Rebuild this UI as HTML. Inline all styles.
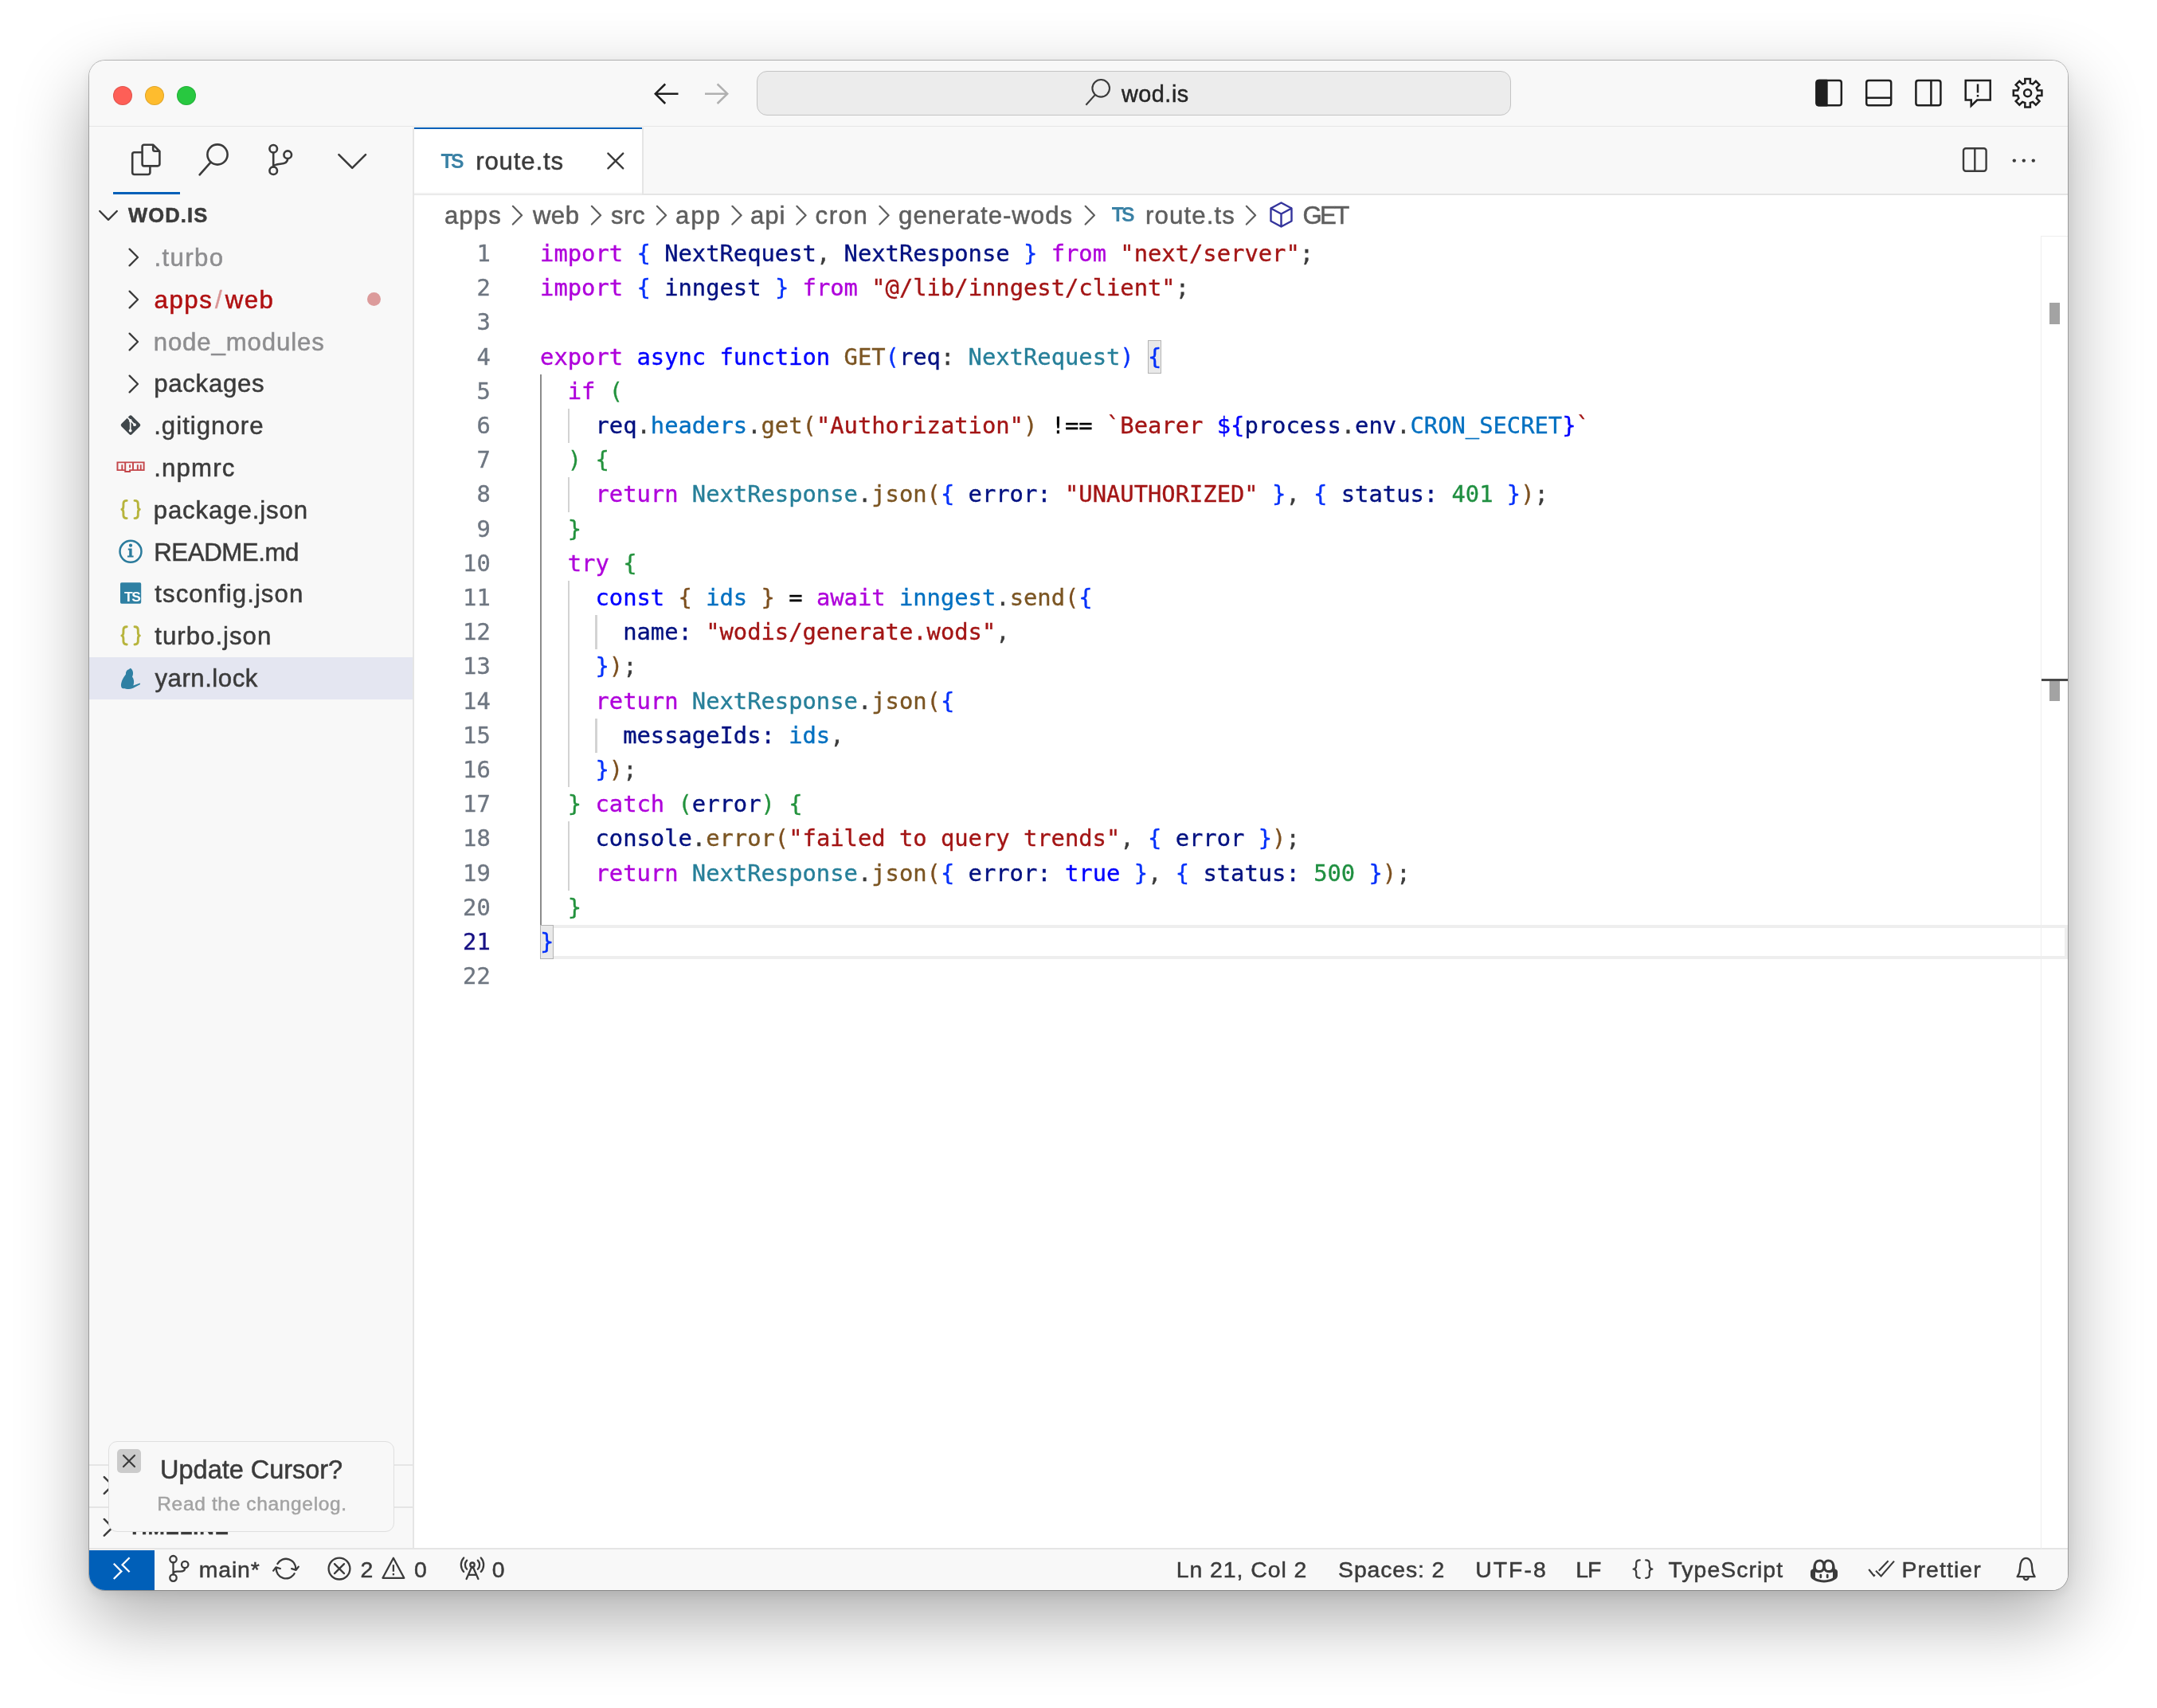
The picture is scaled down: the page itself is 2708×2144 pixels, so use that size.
<!DOCTYPE html>
<html lang="en">
<head>
<meta charset="utf-8">
<title>route.ts - wod.is</title>
<style>
html,body{margin:0;padding:0}
body{width:2708px;height:2144px;background:#fff;position:relative;overflow:hidden;font-family:"Liberation Sans",sans-serif;color:#3b3b3b}
.a{position:absolute}
#shadow{left:112px;top:76px;width:2484px;height:1920px;border-radius:20px;box-shadow:0 0 0 1px rgba(0,0,0,.25),0 36px 92px rgba(0,0,0,.33),0 5px 14px rgba(0,0,0,.07)}
#win{will-change:transform;left:0;top:0;width:2708px;height:2144px;clip-path:inset(76px 112px 148px 112px round 20px);background:#f8f8f8}
svg{position:absolute;overflow:visible}
.ic{fill:none;stroke:#3b3b3b;stroke-width:1;stroke-linecap:round;stroke-linejoin:round}
.t{position:absolute;white-space:pre;line-height:1;-webkit-text-stroke:.5px}
.ui{font-size:31.2px}
#titlebar{left:112px;top:75px;width:2484px;height:83.2px;background:#f8f8f8;border-bottom:1.900px solid #e5e5e5}
.tl{width:24px;height:24px;border-radius:50%;top:108px}
#cc{left:950.2px;top:89.2px;width:947px;height:55.6px;box-sizing:border-box;border:1.8px solid #c4c4c4;border-radius:13px;background:#ececec}
#sidebar{left:112px;top:160px;width:406px;height:1783px;background:#f8f8f8;border-right:2px solid #e5e5e5}
.rt{line-height:52.8px}
#tabs{left:520px;top:160px;width:2076px;height:82.600px;background:#f8f8f8;border-bottom:2px solid #e5e5e5}
#tab{left:520px;top:160px;width:286px;height:83.500px;background:#fff;border-right:2px solid #e5e5e5}
#tabtop{left:520px;top:159.500px;width:286px;height:2.600px;background:#005fb8}
#editor{left:520px;top:244.5px;width:2076px;height:1699.5px;background:#fff}
#status{left:112px;top:1943px;width:2484px;height:53px;background:#f8f8f8;border-top:2.500px solid #e5e5e5;box-sizing:border-box}
#remote{left:112px;top:1945.500px;width:81.800px;height:51px;background:#005fb8}
.st{font-size:28.4px;line-height:53px;color:#3b3b3b}
.bc{line-height:52px;color:#5e5e5e}
.code{font-family:"DejaVu Sans Mono","Liberation Mono",monospace;font-size:28.8px;-webkit-text-stroke:.35px}
.ln{position:absolute;left:520px;width:95.8px;text-align:right;color:#6e7681;line-height:43.2px;height:43.2px;white-space:pre}
.cl{position:absolute;left:678.1px;line-height:43.2px;height:43.2px;white-space:pre;color:#3b3b3b}
.k{color:#af00db}.s{color:#0000ff}.v{color:#001080}.f{color:#7b5522}.ty{color:#267f99}.str{color:#a31515}.n{color:#1f8f40}.c{color:#0070c1}
.b1{color:#0431fa}.b2{color:#23923d}.b3{color:#7c4f1e}.p{color:#000}
.g{position:absolute;width:2.4px;background:#d6d6d6}
.row{position:absolute;left:112px;width:406px;height:52.8px}
</style>
</head>
<body>
<div id="shadow" class="a"></div>
<div id="win" class="a">
<div id="titlebar" class="a"></div><div id="sidebar" class="a"></div><div id="tabs" class="a"></div><div id="editor" class="a"></div><div id="tab" class="a"></div><div id="tabtop" class="a"></div><div id="status" class="a"></div><div id="remote" class="a"></div>
<div class="a tl" style="left:142px;background:#fe5f57;box-shadow:inset 0 0 0 1px rgba(0,0,0,.12)"></div>
<div class="a tl" style="left:182px;background:#febc2e;box-shadow:inset 0 0 0 1px rgba(0,0,0,.12)"></div>
<div class="a tl" style="left:222px;background:#28c840;box-shadow:inset 0 0 0 1px rgba(0,0,0,.12)"></div>
<div id="cc" class="a"></div>
<svg class="ic" style="left:0;top:0;stroke:#1f1f1f;stroke-width:2.500" width="2708" height="160" viewBox="0 0 2708 160">
<path d="M851.500 117.700H823.500M835.200 105.500L822.800 117.700 835.200 130" stroke-linecap="butt" stroke-linejoin="miter"/>
<path d="M885 117.700H912.600M900.600 105.500L913.200 117.700 900.600 130" stroke="#b0b0b0" stroke-linecap="butt" stroke-linejoin="miter"/>
<circle cx="1382.200" cy="110.800" r="10.800" stroke="#3b3b3b" stroke-width="2.100"/><path d="M1375 118.900L1363.400 131.700" stroke="#3b3b3b" stroke-width="2.100" stroke-linecap="butt"/>
<rect x="2280.500" y="101" width="31.300" height="31.300" rx="2.800"/><path d="M2280.500 104.500a3.500 3.500 0 0 1 3.500-3.500h9.400v31.300h-9.400a3.500 3.500 0 0 1-3.500-3.500z" fill="#1f1f1f"/>
<rect x="2343.200" y="101" width="31" height="31.300" rx="2.800"/><path d="M2343.200 122.800h31" stroke-linecap="butt"/>
<rect x="2405.400" y="101" width="31" height="31.300" rx="2.800"/><path d="M2424.400 101v31.300" stroke-linecap="butt"/>
<path d="M2467.700 101h31v24.600h-16.500l-7.500 7.200v-7.200h-7z" stroke-linejoin="miter"/><path d="M2483 105.500v11" stroke-linecap="butt"/><path d="M2483 119v2.600" stroke-linecap="butt"/>
<circle cx="2545.600" cy="116.750" r="4.500"/><path d="M2542.4 104.3L2542.3 99.0L2548.9 99.0L2548.8 104.3L2552.1 105.6L2555.9 101.8L2560.5 106.5L2556.7 110.2L2558.1 113.5L2563.4 113.5L2563.4 120.0L2558.1 120.0L2556.7 123.3L2560.5 127.0L2555.9 131.7L2552.1 127.9L2548.8 129.2L2548.9 134.5L2542.3 134.5L2542.4 129.2L2539.1 127.9L2535.3 131.7L2530.7 127.0L2534.5 123.3L2533.1 120.0L2527.8 120.0L2527.8 113.5L2533.1 113.5L2534.5 110.2L2530.7 106.5L2535.3 101.8L2539.1 105.6Z" stroke-linejoin="miter"/>
</svg>
<div class="t " id="cctext" style="left:1407.90px;top:104.00px;letter-spacing:0.540px;font-size:28.8px;color:#262626">wod.is</div>
<svg class="ic" style="left:0;top:0;stroke-width:2.600" width="2708" height="300" viewBox="0 0 2708 300">
<path d="M178.600 206V184.200a2.400 2.400 0 0 1 2.400-2.400h11.400l8 8v16.200a2.400 2.400 0 0 1-2.400 2.400H181a2.400 2.400 0 0 1-2.400-2.400zM192.200 182v5.600a2.200 2.200 0 0 0 2.200 2.200h5.800M178.200 191.200h-9.600a2.400 2.400 0 0 0-2.400 2.400v23a2.400 2.400 0 0 0 2.400 2.400h17.400a2.400 2.400 0 0 0 2.400-2.400V209"/>
<circle cx="273" cy="194" r="12.600"/><path d="M264.600 203.600L250.600 219.400"/>
<circle cx="343.200" cy="186.800" r="4.800"/><circle cx="361.200" cy="194.200" r="4.800"/><circle cx="343.200" cy="214.200" r="4.800"/><path d="M343.200 191.800V209.200M361.200 199.200c0 5-4 6.200-9 6.600-4.600.4-8.400 1.200-9 3.400"/>
<path d="M425.400 194.200L442.200 210.800 459 194.200"/>
<path d="M125.200 265L136 275.800 146.800 265" stroke-width="2.400"/>
</svg>
<div class="a" style="left:142px;top:241.400px;width:84px;height:2.300px;background:#005fb8"></div>
<div class="t " id="wodis" style="left:161.00px;top:244.30px;letter-spacing:1.080px;line-height:53px;font-size:25.6px;font-weight:bold;color:#3b3b3b">WOD.IS</div>
<div class="t ui rt" id="row0" style="left:193.42px;top:298.00px;letter-spacing:1.386px;color:#8e8e90">.turbo</div>
<svg class="ic" style="left:0;top:303.3px;stroke-width:2.300" width="300" height="40" viewBox="0 0 300 40"><path d="M162.600 9.600L173 20 162.600 30.400"/></svg>
<div class="t ui rt" id="row1" style="left:193.60px;top:350.80px;letter-spacing:1.543px;color:#b01011">apps<span style="opacity:.42;margin:0 2.500px">/</span>web</div>
<svg class="ic" style="left:0;top:356.1px;stroke-width:2.300" width="300" height="40" viewBox="0 0 300 40"><path d="M162.600 9.600L173 20 162.600 30.400"/></svg>
<div class="t ui rt" id="row2" style="left:192.70px;top:403.60px;letter-spacing:0.859px;color:#8e8e90">node_modules</div>
<svg class="ic" style="left:0;top:408.9px;stroke-width:2.300" width="300" height="40" viewBox="0 0 300 40"><path d="M162.600 9.600L173 20 162.600 30.400"/></svg>
<div class="t ui rt" id="row3" style="left:193.20px;top:456.40px;letter-spacing:0.707px;color:#3b3b3b">packages</div>
<svg class="ic" style="left:0;top:461.7px;stroke-width:2.300" width="300" height="40" viewBox="0 0 300 40"><path d="M162.600 9.600L173 20 162.600 30.400"/></svg>
<div class="t ui rt" id="row4" style="left:193.20px;top:509.20px;letter-spacing:1.000px;color:#3b3b3b">.gitignore</div>
<div class="t ui rt" id="row5" style="left:193.20px;top:562.00px;letter-spacing:1.170px;color:#3b3b3b">.npmrc</div>
<div class="t ui rt" id="row6" style="left:192.70px;top:614.80px;letter-spacing:0.863px;color:#3b3b3b">package.json</div>
<div class="t ui rt" id="row7" style="left:193.20px;top:667.60px;letter-spacing:-0.393px;color:#3b3b3b">README.md</div>
<div class="t ui rt" id="row8" style="left:194.30px;top:720.40px;letter-spacing:1.050px;color:#3b3b3b">tsconfig.json</div>
<div class="t ui rt" id="row9" style="left:194.30px;top:773.20px;letter-spacing:1.000px;color:#3b3b3b">turbo.json</div>
<div class="row" style="top:824.6px;height:53.100px;background:#e4e6f1"></div>
<div class="t ui rt" id="row10" style="left:194.50px;top:826.00px;letter-spacing:0.505px;color:#3b3b3b">yarn.lock</div>
<div class="a" style="left:460.500px;top:367.300px;width:17px;height:17px;border-radius:50%;background:#dc9b9b"></div>
<svg style="left:0;top:500px" width="300" height="400" viewBox="0 500 300 400">
<rect x="-9.300" y="-9.300" width="18.600" height="18.600" rx="2.200" transform="translate(164 533.600) rotate(45)" fill="#40474b"/>
<g stroke="#f8f8f8" stroke-width="1.700" fill="none" stroke-linecap="round"><path d="M163.700 527.500V540M160.300 524.300L168.600 532.600"/></g>
<circle cx="163.700" cy="528" r="1.900" fill="#f8f8f8"/><circle cx="163.700" cy="540.600" r="1.900" fill="#f8f8f8"/><circle cx="169" cy="533.200" r="1.900" fill="#f8f8f8"/>
<g transform="translate(146.500 579.400) scale(1.950)"><path fill="#c4474b" fill-rule="evenodd" d="M0,0h18v6H9v1H5V6H0V0z M1,5h2V2h1v3h1V1H1V5z M6,1v5h2V5h2V1H6z M8,2h1v2H8V2z M11,1v4h2V2h1v3h1V2h1v3h1V1H11z"/></g>
<g fill="none" stroke="#b7b43c" stroke-width="2.900" stroke-linecap="round" stroke-linejoin="round">
<path d="M159.200 628.400c-3.300 0-4.300 1.300-4.300 3.900v3.300c0 2.400-.7 3.600-2 3.900 1.300.3 2 1.500 2 3.900v3.300c0 2.600 1 3.900 4.300 3.900"/>
<path d="M169 628.400c3.300 0 4.300 1.300 4.300 3.900v3.300c0 2.400.7 3.600 2 3.900-1.300.3-2 1.500-2 3.900v3.300c0 2.600-1 3.900-4.300 3.900"/>
<path d="M159.200 786.800c-3.300 0-4.300 1.300-4.300 3.900v3.300c0 2.400-.7 3.600-2 3.900 1.300.3 2 1.500 2 3.900v3.300c0 2.600 1 3.900 4.300 3.900"/>
<path d="M169 786.800c3.300 0 4.300 1.300 4.300 3.900v3.300c0 2.400.7 3.600 2 3.900-1.300.3-2 1.500-2 3.900v3.300c0 2.600-1 3.900-4.300 3.900"/>
</g>
<circle cx="164" cy="692.300" r="13.500" fill="none" stroke="#2b7b9c" stroke-width="2.500"/>
<circle cx="164" cy="684.700" r="2.100" fill="#2b7b9c"/><path d="M160.800 688.600h4.800v8.800h2v2h-7.600v-2h2.200v-6.800h-1.400z" fill="#2b7b9c"/>
<rect x="151" y="731.300" width="26.200" height="26.400" rx="1.600" fill="#2f80a3"/>
<path d="M163.800 838.800c1.400 1 2.600 2.400 3 4.200.5 2.400.2 4.600-.8 6.600 2.200 2.800 2.800 6.600 1.400 10.800l8.200-2.900.5 1.500-9 4.700c-3.200 1.600-10 1.600-13.500.4-2.600-1.800-1.700-6.900.2-11 1.400-3 3-4.800 4.200-6.800-.2-3 1.400-5.600 3.800-6 .5-.6 1.200-1.200 2-1.500z" fill="#2f80a3"/>
</svg>
<div class="t" style="left:156px;top:740.600px;font-size:17.400px;font-weight:bold;color:#fff;letter-spacing:-1.300px;-webkit-text-stroke:0">TS</div>
<div class="a" style="left:112px;top:1838px;width:406px;height:2px;background:#e5e5e5"></div>
<div class="a" style="left:112px;top:1891px;width:406px;height:2px;background:#e5e5e5"></div>
<svg class="ic" style="left:0;top:1840px;stroke-width:2.400" width="300" height="110" viewBox="0 0 300 110"><path d="M130.800 14.100L141.200 24.500 130.800 34.900M130.800 66.900L141.200 77.300 130.800 87.700"/></svg>
<div class="t" style="left:161px;top:1838.700px;line-height:52px;font-size:25.6px;font-weight:bold;letter-spacing:.5px">OUTLINE</div>
<div class="t" style="left:161px;top:1891.200px;line-height:52px;font-size:25.6px;font-weight:bold;letter-spacing:.9px">TIMELINE</div>
<div class="a" id="card" style="left:136.400px;top:1808.800px;width:358.800px;height:114.600px;box-sizing:border-box;border:1.600px solid #dfdfdf;border-radius:11px;background:#f8f8f8"></div>
<div class="a" style="left:147px;top:1819px;width:30px;height:30px;border-radius:5px;background:#cbcbcb"></div>
<svg class="ic" style="left:147px;top:1819px;stroke-width:2.200" width="30" height="30" viewBox="0 0 30 30"><path d="M8 8L22 22M22 8L8 22"/></svg>
<div class="t " id="upd" style="left:201.10px;top:1829.00px;letter-spacing:-0.028px;font-size:32.500px;color:#3b3b3b">Update Cursor?</div>
<div class="t " id="rtc" style="left:197.28px;top:1876.00px;letter-spacing:0.650px;font-size:24.500px;color:#a3a3a3">Read the changelog.</div>
<div class="t " id="tsico" style="left:553.45px;top:189.70px;letter-spacing:-2.700px;font-size:24.900px;font-weight:bold;color:#3a81a5;-webkit-text-stroke:0">TS</div>
<div class="t ui" id="tabtxt" style="left:597.16px;top:187.20px;letter-spacing:0.849px;color:#3b3b3b">route.ts</div>
<div class="a" style="left:520px;top:242px;width:286px;height:1.500px;background:#f1f1f1"></div>
<svg class="ic" style="left:0;top:0;stroke-width:2.400" width="2708" height="300" viewBox="0 0 2708 300">
<path d="M763.400 192.600L782.200 211.400M782.200 192.600L763.400 211.400"/>
<rect x="2465" y="186.200" width="28.600" height="28.600" rx="3"/><path d="M2479.300 186.200V214.800"/>
</svg>
<svg style="left:0;top:0" width="2708" height="300" viewBox="0 0 2708 300"><circle cx="2528.800" cy="201.600" r="2.200" fill="#3b3b3b"/><circle cx="2540.800" cy="201.600" r="2.200" fill="#3b3b3b"/><circle cx="2552.800" cy="201.600" r="2.200" fill="#3b3b3b"/></svg>
<div class="t ui bc" id="bc0" style="left:557.88px;top:244.50px;letter-spacing:1.140px;">apps</div>
<div class="t ui bc" id="bc1" style="left:668.90px;top:244.50px;letter-spacing:0.450px;">web</div>
<div class="t ui bc" id="bc2" style="left:767.00px;top:244.50px;letter-spacing:0.450px;">src</div>
<div class="t ui bc" id="bc3" style="left:848.10px;top:244.50px;letter-spacing:1.800px;">app</div>
<div class="t ui bc" id="bc4" style="left:942.10px;top:244.50px;letter-spacing:0.900px;">api</div>
<div class="t ui bc" id="bc5" style="left:1023.60px;top:244.50px;letter-spacing:1.500px;">cron</div>
<div class="t ui bc" id="bc6" style="left:1128.10px;top:244.50px;letter-spacing:0.975px;">generate-wods</div>
<svg class="ic" style="left:0;top:0;stroke-width:2.200;stroke:#5e5e5e" width="2708" height="300" viewBox="0 0 2708 300"><path d="M643.9 258.800L655.1 270.200 643.9 281.600M742.9 258.800L754.1 270.200 742.9 281.600M824.9 258.800L836.1 270.200 824.9 281.600M919.4 258.800L930.6 270.200 919.4 281.600M1000.4 258.800L1011.6 270.200 1000.4 281.600M1104.4 258.800L1115.6 270.200 1104.4 281.600M1362.7 258.800L1373.9 270.200 1362.7 281.600M1564.9 258.800L1576.1 270.200 1564.9 281.600"/></svg>
<div class="t " id="tsico2" style="left:1395.76px;top:257.00px;letter-spacing:-2.880px;font-size:24.900px;font-weight:bold;color:#3a81a5;-webkit-text-stroke:0">TS</div>
<div class="t ui bc" id="bc7" style="left:1437.98px;top:244.50px;letter-spacing:1.127px;">route.ts</div>
<svg class="ic" style="left:0;top:0;stroke-width:2.400;stroke:#34349c" width="2708" height="300" viewBox="0 0 2708 300"><path d="M1608.500 254.500L1621.500 261.500V277.500L1608.500 284.500L1595.500 277.500V261.500ZM1595.500 261.500L1608.500 268.500L1621.500 261.500M1608.500 268.500V284.500"/></svg>
<div class="t ui bc" id="bc8" style="left:1635.46px;top:244.50px;letter-spacing:-2.610px;">GET</div>
<div class="a" style="left:679px;top:1161.2px;width:1917px;height:42.900px;box-sizing:border-box;border:4px solid #eeeeee"></div>
<div class="a" style="left:1441.0px;top:426.8px;width:16.700px;height:42.500px;box-sizing:border-box;border:1.500px solid #b4b4b4;background:#e9e9e9"></div>
<div class="a" style="left:678.1px;top:1161.2px;width:16.700px;height:42.500px;box-sizing:border-box;border:1.500px solid #b4b4b4;background:#e9e9e9"></div>
<div class="g" style="left:678.0px;top:469.8px;height:691.2px;background:#8c8c8c"></div>
<div class="g" style="left:712.7px;top:513.0px;height:43.2px;background:#d3d3d3"></div>
<div class="g" style="left:712.7px;top:599.4px;height:43.2px;background:#d3d3d3"></div>
<div class="g" style="left:712.7px;top:729.0px;height:259.2px;background:#d3d3d3"></div>
<div class="g" style="left:712.7px;top:1031.4px;height:86.4px;background:#d3d3d3"></div>
<div class="g" style="left:747.4px;top:772.2px;height:43.2px;background:#d3d3d3"></div>
<div class="g" style="left:747.4px;top:901.8px;height:43.2px;background:#d3d3d3"></div>
<div class="ln code" style="top:297.0px">1</div><div class="cl code" style="top:297.0px"><span class="k">import</span> <span class="b1">{</span> <span class="v">NextRequest</span>, <span class="v">NextResponse</span> <span class="b1">}</span> <span class="k">from</span> <span class="str">"next/server"</span>;</div>
<div class="ln code" style="top:340.2px">2</div><div class="cl code" style="top:340.2px"><span class="k">import</span> <span class="b1">{</span> <span class="v">inngest</span> <span class="b1">}</span> <span class="k">from</span> <span class="str">"@/lib/inngest/client"</span>;</div>
<div class="ln code" style="top:383.4px">3</div><div class="cl code" style="top:383.4px"></div>
<div class="ln code" style="top:426.6px">4</div><div class="cl code" style="top:426.6px"><span class="k">export</span> <span class="s">async</span> <span class="s">function</span> <span class="f">GET</span><span class="b1">(</span><span class="v">req</span>: <span class="ty">NextRequest</span><span class="b1">)</span> <span class="b1">{</span></div>
<div class="ln code" style="top:469.8px">5</div><div class="cl code" style="top:469.8px">  <span class="k">if</span> <span class="b2">(</span></div>
<div class="ln code" style="top:513.0px">6</div><div class="cl code" style="top:513.0px">    <span class="v">req</span>.<span class="c">headers</span>.<span class="f">get</span><span class="b3">(</span><span class="str">"Authorization"</span><span class="b3">)</span> <span class="p">!==</span> <span class="str">`Bearer </span><span class="s">${</span><span class="v">process</span>.<span class="v">env</span>.<span class="c">CRON_SECRET</span><span class="s">}</span><span class="str">`</span></div>
<div class="ln code" style="top:556.2px">7</div><div class="cl code" style="top:556.2px">  <span class="b2">)</span> <span class="b2">{</span></div>
<div class="ln code" style="top:599.4px">8</div><div class="cl code" style="top:599.4px">    <span class="k">return</span> <span class="ty">NextResponse</span>.<span class="f">json</span><span class="b3">(</span><span class="b1">{</span> <span class="v">error:</span> <span class="str">"UNAUTHORIZED"</span> <span class="b1">}</span>, <span class="b1">{</span> <span class="v">status:</span> <span class="n">401</span> <span class="b1">}</span><span class="b3">)</span>;</div>
<div class="ln code" style="top:642.6px">9</div><div class="cl code" style="top:642.6px">  <span class="b2">}</span></div>
<div class="ln code" style="top:685.8px">10</div><div class="cl code" style="top:685.8px">  <span class="k">try</span> <span class="b2">{</span></div>
<div class="ln code" style="top:729.0px">11</div><div class="cl code" style="top:729.0px">    <span class="s">const</span> <span class="b3">{</span> <span class="c">ids</span> <span class="b3">}</span> <span class="p">=</span> <span class="k">await</span> <span class="c">inngest</span>.<span class="f">send</span><span class="b3">(</span><span class="b1">{</span></div>
<div class="ln code" style="top:772.2px">12</div><div class="cl code" style="top:772.2px">      <span class="v">name:</span> <span class="str">"wodis/generate.wods"</span>,</div>
<div class="ln code" style="top:815.4px">13</div><div class="cl code" style="top:815.4px">    <span class="b1">}</span><span class="b3">)</span>;</div>
<div class="ln code" style="top:858.6px">14</div><div class="cl code" style="top:858.6px">    <span class="k">return</span> <span class="ty">NextResponse</span>.<span class="f">json</span><span class="b3">(</span><span class="b1">{</span></div>
<div class="ln code" style="top:901.8px">15</div><div class="cl code" style="top:901.8px">      <span class="v">messageIds:</span> <span class="c">ids</span>,</div>
<div class="ln code" style="top:945.0px">16</div><div class="cl code" style="top:945.0px">    <span class="b1">}</span><span class="b3">)</span>;</div>
<div class="ln code" style="top:988.2px">17</div><div class="cl code" style="top:988.2px">  <span class="b2">}</span> <span class="k">catch</span> <span class="b2">(</span><span class="v">error</span><span class="b2">)</span> <span class="b2">{</span></div>
<div class="ln code" style="top:1031.4px">18</div><div class="cl code" style="top:1031.4px">    <span class="v">console</span>.<span class="f">error</span><span class="b3">(</span><span class="str">"failed to query trends"</span>, <span class="b1">{</span> <span class="v">error</span> <span class="b1">}</span><span class="b3">)</span>;</div>
<div class="ln code" style="top:1074.6px">19</div><div class="cl code" style="top:1074.6px">    <span class="k">return</span> <span class="ty">NextResponse</span>.<span class="f">json</span><span class="b3">(</span><span class="b1">{</span> <span class="v">error:</span> <span class="s">true</span> <span class="b1">}</span>, <span class="b1">{</span> <span class="v">status:</span> <span class="n">500</span> <span class="b1">}</span><span class="b3">)</span>;</div>
<div class="ln code" style="top:1117.8px">20</div><div class="cl code" style="top:1117.8px">  <span class="b2">}</span></div>
<div class="ln code" style="top:1161.0px;color:#171184">21</div><div class="cl code" style="top:1161.0px"><span class="b1">}</span></div>
<div class="ln code" style="top:1204.2px">22</div><div class="cl code" style="top:1204.2px"></div>
<div class="a" style="left:2562px;top:296px;width:34px;height:1648px;box-sizing:border-box;border-left:1.500px solid #eeeeee;border-top:1.500px solid #eeeeee"></div>
<div class="a" style="left:2573.400px;top:379.700px;width:12.300px;height:27.800px;background:#a3a3a3"></div>
<div class="a" style="left:2573.400px;top:854px;width:12.300px;height:26px;background:#a3a3a3"></div>
<div class="a" style="left:2563px;top:851.500px;width:33px;height:3px;background:#4a4a4a"></div>
<div class="t st" id="st0" style="left:249.80px;top:1943.90px;letter-spacing:0.838px;">main*</div>
<div class="t st" id="st1" style="left:452.60px;top:1943.90px;letter-spacing:-8.550px;">2</div>
<div class="t st" id="st2" style="left:520.00px;top:1943.90px;letter-spacing:9.225px;">0</div>
<div class="t st" id="st3" style="left:617.81px;top:1943.90px;letter-spacing:7.650px;">0</div>
<div class="t st" id="st4" style="left:1476.82px;top:1943.90px;letter-spacing:0.948px;">Ln 21, Col 2</div>
<div class="t st" id="st5" style="left:1680.10px;top:1943.90px;letter-spacing:0.882px;">Spaces: 2</div>
<div class="t st" id="st6" style="left:1852.20px;top:1943.90px;letter-spacing:2.025px;">UTF-8</div>
<div class="t st" id="st7" style="left:1978.20px;top:1943.90px;letter-spacing:-0.900px;">LF</div>
<div class="t st" id="st8" style="left:2094.50px;top:1943.90px;letter-spacing:1.050px;">TypeScript</div>
<div class="t st" id="st9" style="left:2387.50px;top:1943.90px;letter-spacing:1.094px;">Prettier</div>
<svg class="ic" style="left:0;top:1900px;stroke-width:2.300" width="2708" height="110" viewBox="0 1900 2708 110">
<path d="M142.800 1962.800L152.400 1972.400 142.800 1982M162.600 1955.200L153.600 1964.200 162.600 1973.200" stroke="#fff" stroke-linecap="butt" stroke-linejoin="miter"/>
<circle cx="217.500" cy="1957.200" r="4.200"/><circle cx="232.200" cy="1964" r="4.200"/><circle cx="217.500" cy="1980.600" r="4.200"/><path d="M217.500 1961.400V1976.400M232.200 1968.200c0 3-2 4.400-6 4.400h-4c-2.500 0-4.400 1-4.700 3.200"/>
<path d="M348.400 1963a12.200 12.200 0 0 1 22.800 7M369.600 1975.200a12.200 12.200 0 0 1-22.800-7M366.200 1969.200L371.600 1970.800 374.800 1966.600M351.800 1969L346.400 1967.400 343.200 1971.600"/>
<circle cx="426" cy="1969.100" r="13.400"/><path d="M420 1963.100L432 1975.100M432 1963.100L420 1975.100"/>
<path d="M493.900 1955.800L507.300 1980.800H480.500Z"/><path d="M493.900 1964.200v8.600" stroke-linecap="butt"/><path d="M493.900 1975v2.400" stroke-linecap="butt"/>
<circle cx="593" cy="1964.200" r="2.700"/><path d="M592.200 1967L585.600 1982M593.800 1967L600.400 1982M588 1976.800H598M586.200 1958.600a8 8 0 0 0 0 11.200M599.800 1958.600a8 8 0 0 1 0 11.200M582.200 1955.400a13.200 13.200 0 0 0 0 17.600M603.800 1955.400a13.200 13.200 0 0 1 0 17.600"/>
<path d="M2058.800 1958.400c-3.600 0-4.600 1.400-4.600 3.800v3.400c0 2.400-1 3.800-3.600 4 2.600.2 3.600 1.600 3.600 4v3.400c0 2.400 1 3.800 4.600 3.800M2066.200 1958.400c3.600 0 4.600 1.400 4.600 3.800v3.400c0 2.400 1 3.800 3.600 4-2.600.2-3.600 1.600-3.600 4v3.400c0 2.400-1 3.800-4.600 3.800" stroke-width="2.200"/>
<path d="M2346.200 1970L2352.600 1978 2354 1976.900M2355 1971.800L2361.600 1978.400 2378 1959.600M2358.800 1971.800L2370.600 1959.200" stroke-width="2.100" stroke-linecap="butt" stroke-linejoin="miter"/>
<path d="M2532.600 1979.200C2534.800 1976 2536 1973.400 2536 1968.400C2536 1960.400 2539.200 1955.800 2543.600 1955.800C2548 1955.800 2551.200 1960.400 2551.200 1968.400C2551.200 1973.400 2552.400 1976 2554.600 1979.200ZM2540.600 1980a3 3 0 0 0 6 0"/>
</svg>
<svg style="left:2273px;top:1956.500px" width="34" height="29.500" viewBox="0 0 34 29.500">
<path fill="#3b3b3b" fill-rule="evenodd" d="M17 29.500C9 29.500 2.500 26 1 23.800 .2 22.600 0 21.400 0 20v-3.600c0-1.800 1-3 2.600-3.600l.6-.2C3.400 8.600 3.800 5 6 2.800 8.600.2 12.600 0 14.600 1.200c1 .6 1.800 1.400 2.400 2.400.6-1 1.400-1.800 2.400-2.400C21.400 0 25.400.2 28 2.800c2.200 2.200 2.600 5.800 2.800 9.800l.6.200c1.600.6 2.600 1.800 2.600 3.600V20c0 1.400-.2 2.600-1 3.800-1.500 2.200-8 5.700-16 5.700zM8.200 4.800C6.800 6.200 6.600 9.400 7 11.600c.4 1.600 1.400 2.400 3.600 2.400 3 0 4.400-1 4.600-4.600.2-2.600-.4-4.600-1.600-5.400-1.400-.8-4-.6-5.400.8zm17.600 0c-1.400-1.400-4-1.600-5.400-.8-1.200.8-1.800 2.800-1.600 5.400.2 3.600 1.600 4.600 4.600 4.600 2.200 0 3.200-.8 3.600-2.400.4-2.200.2-5.400-1.200-6.800zM6 16.200v7.400c2.400 1.600 6.400 3 11 3s8.600-1.400 11-3v-7.400c-1.200.6-2.800 1-4.800 1-2.800 0-5-1-6.200-3-1.200 2-3.400 3-6.200 3-2 0-3.600-.4-4.800-1zm6.800 2.600c.8 0 1.400.6 1.400 1.400v2.600c0 .8-.6 1.400-1.400 1.400s-1.400-.6-1.400-1.400v-2.600c0-.8.6-1.400 1.400-1.400zm8.400 0c.8 0 1.400.6 1.400 1.400v2.600c0 .8-.6 1.400-1.400 1.400s-1.400-.6-1.400-1.400v-2.600c0-.8.6-1.400 1.400-1.400z"/></svg>
</div>
</body>
</html>
